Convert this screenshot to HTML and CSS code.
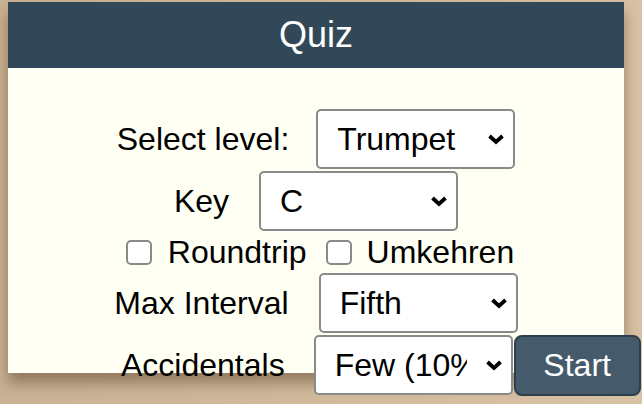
FILE: index.html
```html
<!DOCTYPE html>
<html lang="en">
<head>
<meta charset="utf-8">
<title>Quiz</title>
<link rel="stylesheet" href="styles.css">
</head>
<body>
<div class="card">
  <div class="card-header">Quiz</div>
  <div class="card-body">
    <div class="row">
      <span class="label label-level">Select level:</span>
      <select class="select"><option>Trumpet</option></select>
    </div>
    <div class="row">
      <span class="label">Key</span>
      <select class="select"><option>C</option></select>
    </div>
    <div class="row row-checks">
      <input type="checkbox" class="check">
      <span class="check-label">Roundtrip</span>
      <input type="checkbox" class="check check-second">
      <span class="check-label">Umkehren</span>
    </div>
    <div class="row">
      <span class="label">Max Interval</span>
      <select class="select"><option>Fifth</option></select>
    </div>
    <div class="row row-last">
      <span class="label">Accidentals</span>
      <select class="select select-narrow"><option>Few (10%)</option></select>
      <button class="start">Start</button>
    </div>
  </div>
</div>
</body>
</html>
```
FILE: styles.css
```css
html, body {
  margin: 0;
  padding: 0;
}
body {
  background: linear-gradient(90deg, #cbb295 0%, #d3bb9e 60%, #d8c2a6 100%);
  height: 404px;
  overflow: hidden;
  padding: 2px 0 0 8px;
  box-sizing: border-box;
  font-family: "Liberation Sans", Arial, sans-serif;
  color: #000;
}
.card {
  width: 616px;
  height: 371px;
  background: #fffff3;
  box-shadow: 0 10px 14px rgba(70, 48, 25, 0.45);
  display: flex;
  flex-direction: column;
}
.card-header {
  height: 66px;
  background: #324858;
  color: #fff;
  font-size: 36px;
  line-height: 66px;
  text-align: center;
  flex: none;
}
.card-body {
  padding-top: 40px;
}
.row {
  display: flex;
  align-items: center;
  justify-content: center;
  height: 62px;
  font-size: 32px;
  white-space: nowrap;
}
.label {
  margin-right: 30px;
}
.label-level {
  margin-right: 27px;
}
.select {
  -webkit-appearance: none;
  appearance: none;
  width: 199px;
  height: 60px;
  box-sizing: border-box;
  margin: 1px 0;
  border: 2px solid #8a8a8a;
  border-radius: 5px;
  padding: 0 44px 0 19px;
  font-family: "Liberation Sans", Arial, sans-serif;
  font-size: 32px;
  color: #000;
  background-color: #fff;
  background-image: url("data:image/svg+xml;utf8,<svg xmlns='http://www.w3.org/2000/svg' width='18' height='12' viewBox='0 0 18 12'><path d='M2.5 3 L9 9 L15.5 3' fill='none' stroke='black' stroke-width='3.8'/></svg>");
  background-repeat: no-repeat;
  background-position: right 8px center;
  background-size: 18px 12px;
}
.row-checks {
  height: 40px;
  padding-left: 8px;
}
.check {
  -webkit-appearance: none;
  appearance: none;
  width: 26px;
  height: 25px;
  margin: 0 16px 0 0;
  box-sizing: border-box;
  border: 2px solid #8a8a8a;
  border-radius: 5px;
  background: #fff;
}
.check-second {
  margin-left: 19px;
  margin-right: 15px;
}
.row-last {
  justify-content: flex-start;
  padding-left: 113px;
}
.row-last .label {
  margin-right: 29px;
}
.start {
  flex: none;
  margin-left: 1px;
  width: 127px;
  height: 61px;
  box-sizing: border-box;
  background: #455b6b;
  border: 2px solid #2c3f4d;
  border-radius: 8px;
  color: #fff;
  font-family: "Liberation Sans", Arial, sans-serif;
  font-size: 32px;
  padding: 0;
}
```
